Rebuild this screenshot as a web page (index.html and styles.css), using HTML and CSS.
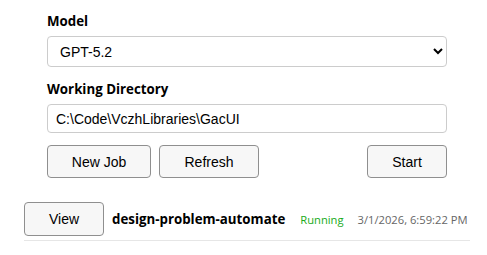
FILE: index.html
```html
<!DOCTYPE html>
<html lang="en">
<head>
  <meta charset="utf-8">
  <title>Jobs</title>
  <link rel="stylesheet" href="styles.css">
</head>
<body>
  <div id="content">
    <div class="form">
      <label class="field-label" for="model">Model</label>
      <select id="model" class="field">
        <option>GPT-5.2</option>
      </select>
      <label class="field-label" for="workdir">Working Directory</label>
      <input id="workdir" class="field" type="text" value="C:\Code\VczhLibraries\GacUI">
      <div class="actions">
        <button class="btn btn-wide">New Job</button>
        <button class="btn btn-wide">Refresh</button>
        <button class="btn btn-start">Start</button>
      </div>
    </div>
    <div class="jobs">
      <div class="job">
        <button class="btn btn-view">View</button>
        <span class="job-name">design-problem-automate</span>
        <span class="job-status">Running</span>
        <span class="job-time">3/1/2026, 6:59:22 PM</span>
      </div>
    </div>
  </div>
</body>
</html>
```

FILE: styles.css
```css
body {
  margin: 0;
  background-color: #ffffff;
  font-family: "Open Sans", sans-serif;
}

#content {
  padding-top: 12px;
}

.form {
  display: flex;
  flex-direction: column;
  width: 400px;
  margin-left: 47px;
}

.field-label {
  font-size: 13.3px;
  font-weight: bold;
  line-height: 19px;
  margin-bottom: 5px;
  color: #000;
}

.field {
  box-sizing: border-box;
  border: 1px solid #cccccc;
  border-radius: 4px;
  background-color: #fff;
  font-family: "Liberation Sans", Arial, sans-serif;
  font-size: 14px;
  color: #000;
}

select.field {
  height: 31px;
  padding: 0 8px;
  margin-bottom: 13px;
}

input.field {
  height: 29px;
  padding: 0 8px;
  margin-bottom: 12px;
}

.actions {
  display: flex;
  gap: 8px;
}

.btn {
  box-sizing: border-box;
  height: 33px;
  border: 1px solid #8f8f8f;
  border-radius: 4px;
  background-color: #f7f7f7;
  font-family: "Liberation Sans", Arial, sans-serif;
  font-size: 14px;
  color: #000;
  cursor: pointer;
}

.btn-wide {
  width: 104px;
}

.actions .btn-wide + .btn-wide {
  width: 100px;
}

.btn-start {
  width: 80px;
  margin-left: auto;
}

.jobs {
  margin: 24px 17px 0 24px;
}

.job {
  display: flex;
  align-items: center;
  padding-bottom: 4px;
  border-bottom: 1px solid #e6e6e6;
  width: 446px;
  white-space: nowrap;
}

.btn-view {
  flex-shrink: 0;
  width: 80px;
  height: 34px;
  margin-right: 8px;
}

.job-name {
  font-size: 13.3px;
  font-weight: bold;
  margin-right: 15px;
}

.job-status {
  font-size: 11.2px;
  color: #1aab1a;
  margin-right: 14px;
}

.job-time {
  font-size: 11.2px;
  color: #666666;
}
```
